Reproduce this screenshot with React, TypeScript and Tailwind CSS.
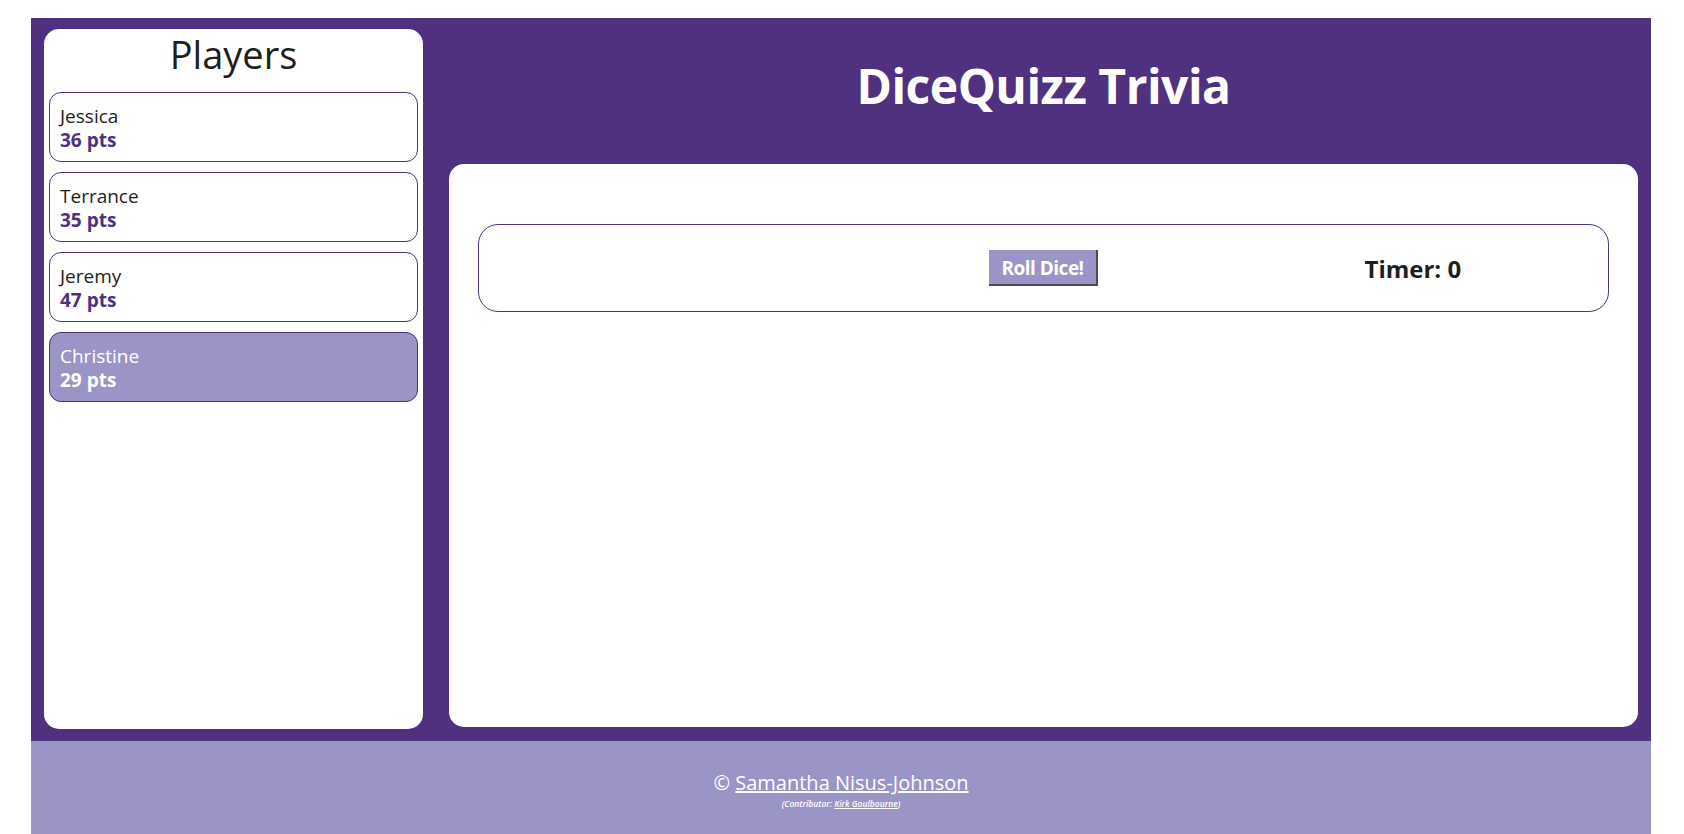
import React from 'react';

interface Player {
  name: string;
  points: number;
  active?: boolean;
}

const players: Player[] = [
  { name: 'Jessica', points: 36 },
  { name: 'Terrance', points: 35 },
  { name: 'Jeremy', points: 47 },
  { name: 'Christine', points: 29, active: true },
];

function PlayerCard({ player }: { player: Player }) {
  return (
    <div
      className={`h-[70px] rounded-[12px] border border-[#50317f] px-[10px] pt-[11px] text-[19px] leading-[24px] ${
        player.active ? 'bg-[#9b94c6] text-white' : 'bg-white text-[#1e1e1e]'
      }`}
    >
      <div className="font-medium">{player.name}</div>
      <div className={`font-bold ${player.active ? 'text-white' : 'text-[#50317f]'}`}>
        {player.points} pts
      </div>
    </div>
  );
}

export default function App() {
  return (
    <div className="min-h-screen bg-white pt-[18px] font-['Open_Sans','Noto_Sans',sans-serif]">
      <div className="ml-[31px] w-[1620px]">
        {/* zona morada */}
        <div className="flex gap-[26px] bg-[#50317f] px-[13px] pt-[11px] pb-[12px]">
          <aside className="flex h-[700px] w-[379px] flex-col rounded-[15px] bg-white px-[5px]">
            <h2 className="h-[63px] text-center text-[38px] font-medium leading-[50px] text-[#1e1e1e]">
              Players
            </h2>
            <div className="flex flex-col gap-[10px]">
              {players.map((p) => (
                <PlayerCard key={p.name} player={p} />
              ))}
            </div>
          </aside>

          <main className="flex flex-1 flex-col">
            <header className="flex h-[135px] items-center justify-center pb-[22px]">
              <h1 className="text-[48px] font-bold tracking-[-0.5px] text-white">DiceQuizz Trivia</h1>
            </header>
            <section className="h-[563px] rounded-[15px] bg-white px-[29px] pt-[60px]">
              <div className="grid h-[88px] grid-cols-3 items-center rounded-[20px] border border-[#50317f]">
                <div />
                <div className="flex justify-center">
                  <button className="h-[36px] w-[109px] border-r-2 border-b-2 border-[#4a4a5a] bg-[#9b94c6] pt-[3px] text-[19px] font-bold tracking-[-0.5px] text-white">
                    Roll Dice!
                  </button>
                </div>
                <div className="pt-[2px] pr-[14px] text-center text-[24px] font-bold text-[#1e1e1e]">Timer: 0</div>
              </div>
            </section>
          </main>
        </div>

        {/* pie de página */}
        <footer className="flex h-[93px] flex-col items-center bg-[#9b94c6] pt-[29px] text-white">
          <p className="text-[20px] font-medium leading-[26px]">
            ©{' '}
            <a href="#" className="underline">
              Samantha Nisus-Johnson
            </a>
          </p>
          <p className="mt-[2px] text-[8.5px] font-semibold italic leading-[12px]">
            (Contributor:{' '}
            <a href="#" className="underline">
              Kirk Goulbourne
            </a>
            )
          </p>
        </footer>
      </div>
    </div>
  );
}
